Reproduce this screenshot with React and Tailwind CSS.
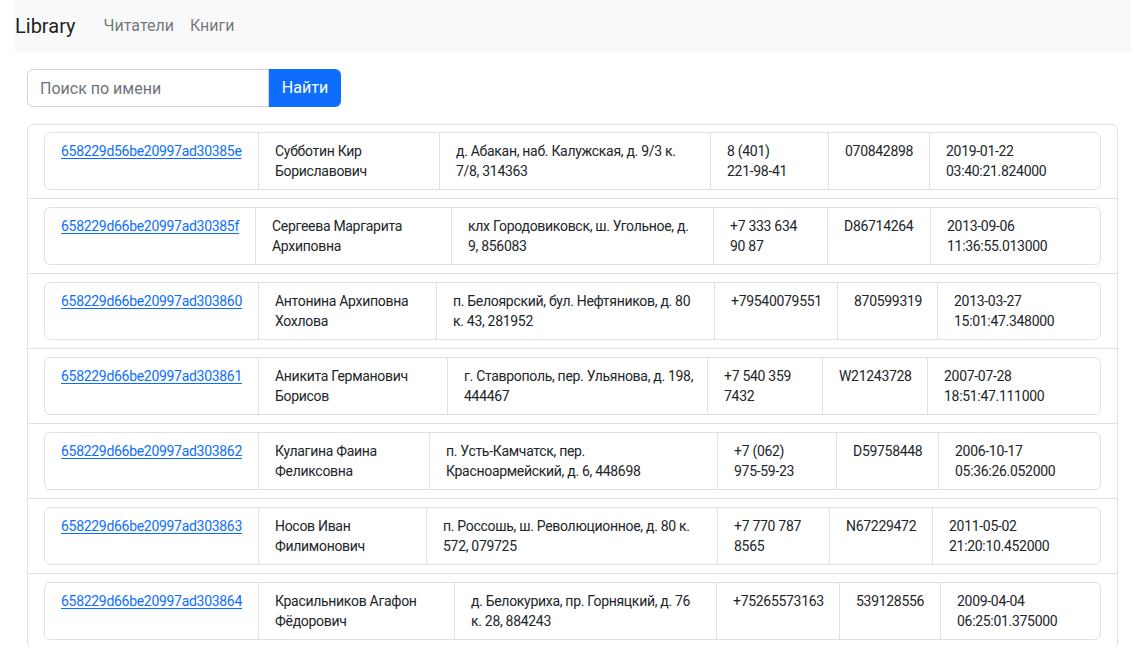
const readers = [
  {
    id: "658229d56be20997ad30385e",
    name: "Субботин Кир Бориславович",
    address: "д. Абакан, наб. Калужская, д. 9/3 к. 7/8, 314363",
    phone: "8 (401) 221-98-41",
    passport: "070842898",
    date: "2019-01-22 03:40:21.824000",
    w: ["w-[213px]", "w-[181px]", "w-[271px]", "w-[118px]", "w-[101px]"],
  },
  {
    id: "658229d66be20997ad30385f",
    name: "Сергеева Маргарита Архиповна",
    address: "клх Городовиковск, ш. Угольное, д. 9, 856083",
    phone: "+7 333 634 90 87",
    passport: "D86714264",
    date: "2013-09-06 11:36:55.013000",
    w: ["w-[210px]", "w-[196px]", "w-[262px]", "w-[114px]", "w-[103px]"],
  },
  {
    id: "658229d66be20997ad303860",
    name: "Антонина Архиповна Хохлова",
    address: "п. Белоярский, бул. Нефтяников, д. 80 к. 43, 281952",
    phone: "+79540079551",
    passport: "870599319",
    date: "2013-03-27 15:01:47.348000",
    w: ["w-[213px]", "w-[178px]", "w-[278px]", "w-[123px]", "w-[100px]"],
  },
  {
    id: "658229d66be20997ad303861",
    name: "Аникита Германович Борисов",
    address: "г. Ставрополь, пер. Ульянова, д. 198, 444467",
    phone: "+7 540 359 7432",
    passport: "W21243728",
    date: "2007-07-28 18:51:47.111000",
    w: ["w-[213px]", "w-[189px]", "w-[260px]", "w-[115px]", "w-[105px]"],
    tight: true,
  },
  {
    id: "658229d66be20997ad303862",
    name: "Кулагина Фаина Феликсовна",
    address: "п. Усть-Камчатск, пер. Красноармейский, д. 6, 448698",
    phone: "+7 (062) 975-59-23",
    passport: "D59758448",
    date: "2006-10-17 05:36:26.052000",
    w: ["w-[213px]", "w-[171px]", "w-[288px]", "w-[119px]", "w-[102px]"],
  },
  {
    id: "658229d66be20997ad303863",
    name: "Носов Иван Филимонович",
    address: "п. Россошь, ш. Революционное, д. 80 к. 572, 079725",
    phone: "+7 770 787 8565",
    passport: "N67229472",
    date: "2011-05-02 21:20:10.452000",
    w: ["w-[213px]", "w-[168px]", "w-[291px]", "w-[112px]", "w-[103px]"],
  },
  {
    id: "658229d66be20997ad303864",
    name: "Красильников Агафон Фёдорович",
    address: "д. Белокуриха, пр. Горняцкий, д. 76 к. 28, 884243",
    phone: "+75265573163",
    passport: "539128556",
    date: "2009-04-04 06:25:01.375000",
    w: ["w-[213px]", "w-[196px]", "w-[262px]", "w-[123px]", "w-[101px]"],
  },
];

// keep phone chunks whole, break only on spaces
function Phone({ value }) {
  const parts = value.split(" ");
  return parts.map((p, i) => (
    <span key={i}>
      <span className="whitespace-nowrap">{p}</span>
      {i < parts.length - 1 ? " " : null}
    </span>
  ));
}

function ReaderRow({ r }) {
  return (
    <li className="px-4 pt-2 first:pt-[7px] pb-2 border-b border-[#dee2e6] last:border-b-0">
      <div className="flex border border-[#dee2e6] rounded-[6px] text-[14px] leading-5 tracking-[-0.3px] text-[#212529]">
        <div className={`${r.w[0]} shrink-0 px-4 py-2`}>
          <a href="#" className="text-[#0d6efd] underline underline-offset-2">{r.id}</a>
        </div>
        <div className={`${r.w[1]} shrink-0 px-4 py-2 border-l border-[#dee2e6]`}>{r.name}</div>
        <div className={`${r.w[2]} shrink-0 pl-4 py-2 border-l border-[#dee2e6] ${r.tight ? "pr-3" : "pr-4"}`}>
          {r.address}
        </div>
        <div className={`${r.w[3]} shrink-0 px-4 py-2 border-l border-[#dee2e6]`}>
          <Phone value={r.phone} />
        </div>
        <div className={`${r.w[4]} shrink-0 px-4 py-2 border-l border-[#dee2e6]`}>{r.passport}</div>
        <div className="flex-1 px-4 py-2 border-l border-[#dee2e6]">{r.date}</div>
      </div>
    </li>
  );
}

export default function App() {
  return (
    <div className="min-h-screen bg-white font-[Roboto,sans-serif] text-[#212529]">
      <nav className="ml-[15px] mr-[4px] h-[52px] bg-[#f8f9fa] flex items-center">
        <span className="text-[20px] text-black/90 mr-5">Library</span>
        <a href="#" className="px-2 text-[16px] text-black/55">Читатели</a>
        <a href="#" className="px-2 text-[16px] text-black/55">Книги</a>
      </nav>

      <div className="ml-[27px] mr-[17px] mt-[17px]">
        <form className="flex" onSubmit={(e) => e.preventDefault()}>
          <input
            type="text"
            placeholder="Поиск по имени"
            className="w-[242px] h-[38px] px-3 text-[16px] border border-[#ced4da] rounded-l-[6px] placeholder:text-[#6c757d] outline-none"
          />
          <button type="submit" className="w-[72px] h-[38px] bg-[#0d6efd] text-white text-[16px] rounded-r-[6px]">
            Найти
          </button>
        </form>

        <ul className="mt-[17px] border border-[#dee2e6] rounded-[6px]">
          {readers.map((r) => (
            <ReaderRow key={r.id} r={r} />
          ))}
        </ul>
      </div>
    </div>
  );
}
